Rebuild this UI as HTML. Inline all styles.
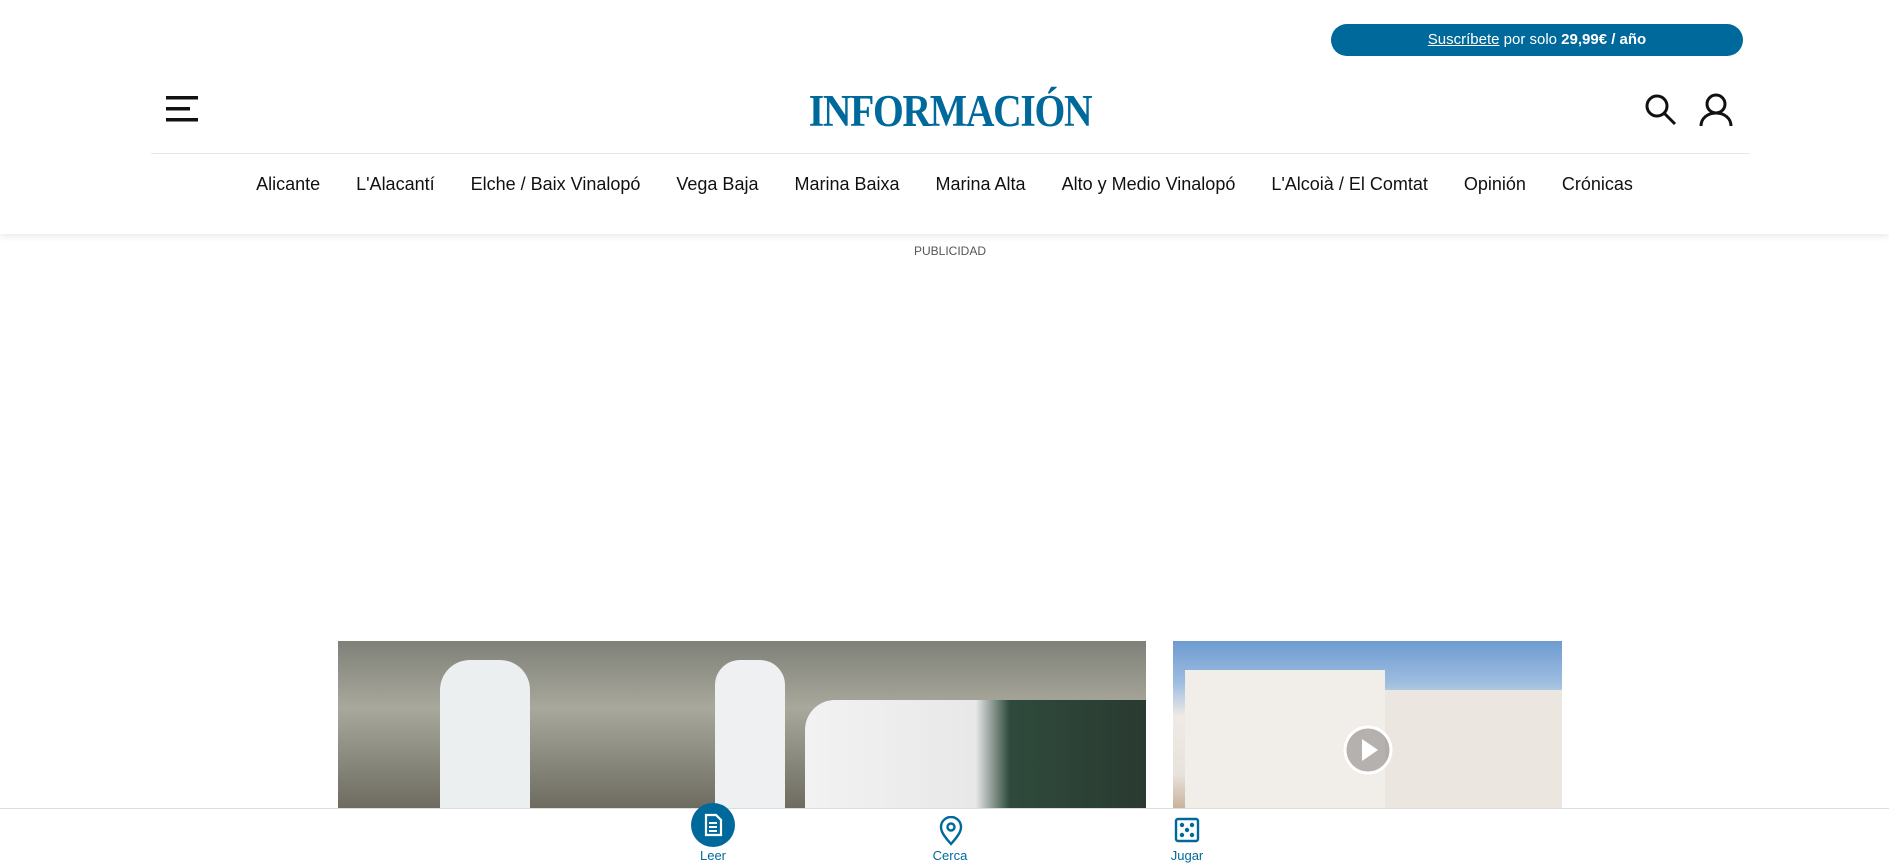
<!DOCTYPE html>
<html><head><meta charset="utf-8"><style>
*{margin:0;padding:0;box-sizing:border-box}
body{width:1889px;height:860px;overflow:hidden;background:#fff;font-family:"Liberation Sans",sans-serif;position:relative}
.abs{position:absolute}
.sub{left:1331px;top:24px;width:412px;height:32px;border-radius:16px;background:#00699c;color:#fff;font-size:15px;text-align:center;line-height:32px}
.sub u{text-decoration:underline}
.logo{left:780px;top:85px;width:340px;text-align:center;font-family:"Liberation Serif",serif;font-weight:bold;color:#00699c;font-size:45px;letter-spacing:-1.5px;transform:scaleX(.88)}
.hdr{left:0;top:0;width:1889px;height:234px;box-shadow:0 3px 6px rgba(0,0,0,.08)}
.line{left:151px;top:153px;width:1599px;height:1px;background:#e8e8e8}
.nav{left:0;top:174px;width:1889px;text-align:center;font-size:18px;color:#111;white-space:nowrap}
.nav span{margin:0 18px}
.pub{left:0;top:244px;width:1900px;text-align:center;font-size:12px;color:#555}
.img1{left:338px;top:641px;width:808px;height:167px;background:linear-gradient(90deg,rgba(255,255,255,0) 0%,rgba(255,255,255,0) 100%),linear-gradient(180deg,#7f8078 0%,#a8a89c 40%,#6e6c60 100%)}
.img2{left:1173px;top:641px;width:389px;height:167px;background:linear-gradient(180deg,#6e9bd0 0%,#9dbde0 25%,#efeae5 45%,#e8e2dc 80%,#c9b39a 100%)}
.bar{left:0;top:808px;width:1889px;height:52px;background:#fff;border-top:1px solid #ddd}
.lab{font-size:13px;color:#00699c;width:80px;text-align:center}
</style></head><body>
<div class="abs hdr"></div>
<div class="abs sub"><u>Suscríbete</u> por solo <b>29,99€ / año</b></div>
<svg class="abs" style="left:166px;top:96px" width="34" height="27"><rect x="0" y="0" width="32" height="3.5" fill="#111"/><rect x="0" y="11" width="24" height="3.5" fill="#111"/><rect x="0" y="22" width="32" height="3.5" fill="#111"/></svg>
<div class="abs logo">INFORMACIÓN</div>
<svg class="abs" style="left:1644px;top:93px" width="34" height="34" fill="none" stroke="#111" stroke-width="3"><circle cx="13" cy="13" r="10"/><line x1="20" y1="20" x2="31" y2="31"/></svg>
<svg class="abs" style="left:1698px;top:93px" width="36" height="34" fill="none" stroke="#111" stroke-width="3"><circle cx="18" cy="11" r="9"/><path d="M3 33c0-8 7-13 15-13s15 5 15 13"/></svg>
<div class="abs line"></div>
<div class="abs nav"><span>Alicante</span><span>L'Alacantí</span><span>Elche / Baix Vinalopó</span><span>Vega Baja</span><span>Marina Baixa</span><span>Marina Alta</span><span>Alto y Medio Vinalopó</span><span>L'Alcoià / El Comtat</span><span>Opinión</span><span>Crónicas</span></div>
<div class="abs pub">PUBLICIDAD</div>
<div class="abs img1"></div>
<div class="abs" style="left:440px;top:660px;width:90px;height:148px;background:#eceff0;border-radius:30px 30px 0 0"></div>
<div class="abs" style="left:715px;top:660px;width:70px;height:148px;background:#eef0f2;border-radius:25px 25px 0 0"></div>
<div class="abs" style="left:805px;top:700px;width:341px;height:108px;background:linear-gradient(90deg,#f2f2f2 0%,#e8e8e8 50%,#2f4a3c 60%,#2a3a30 100%);border-radius:30px 0 0 0"></div>
<div class="abs img2"></div>
<div class="abs" style="left:1185px;top:670px;width:200px;height:138px;background:#f1ede8"></div>
<div class="abs" style="left:1385px;top:690px;width:177px;height:118px;background:#ece6e0"></div>
<svg class="abs" style="left:1342px;top:724px" width="52" height="52"><circle cx="26" cy="26" r="23" fill="rgba(0,0,0,.25)" stroke="#fff" stroke-width="3"/><path d="M20 15l16 11-16 11z" fill="#fff"/></svg>
<div class="abs bar"></div>
<svg class="abs" style="left:691px;top:803px" width="44" height="44"><circle cx="22" cy="22" r="22" fill="#00699c"/><path d="M15 12h10l5 5v15h-15z" fill="none" stroke="#fff" stroke-width="2.2"/><path d="M18 20h8M18 24h8M18 28h8" stroke="#fff" stroke-width="2"/></svg>
<svg class="abs" style="left:938px;top:816px" width="26" height="30" fill="none" stroke="#00699c" stroke-width="2.4"><path d="M13 28C5 19 3 15 3 11a10 10 0 0 1 20 0c0 4-2 8-10 17z"/><circle cx="13" cy="11" r="3.5"/></svg>
<svg class="abs" style="left:1174px;top:817px" width="26" height="26" fill="none" stroke="#00699c" stroke-width="2.4"><rect x="2" y="2" width="22" height="22" rx="2"/><circle cx="8" cy="8" r="1" fill="#00699c"/><circle cx="18" cy="8" r="1" fill="#00699c"/><circle cx="13" cy="13" r="1" fill="#00699c"/><circle cx="8" cy="18" r="1" fill="#00699c"/><circle cx="18" cy="18" r="1" fill="#00699c"/></svg>
<div class="abs lab" style="left:673px;top:848px">Leer</div>
<div class="abs lab" style="left:910px;top:848px">Cerca</div>
<div class="abs lab" style="left:1147px;top:848px">Jugar</div>
</body></html>
